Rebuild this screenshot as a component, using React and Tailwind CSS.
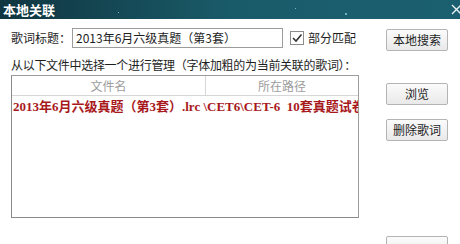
import React from "react";

const ui = { fontFamily: '"Noto Sans CJK SC", "Liberation Sans", sans-serif' };
const rowFont = { fontFamily: '"Liberation Serif", "Noto Sans CJK SC", serif' };

function Button({ children, className = "" }) {
  return (
    <div
      className={`flex h-[22px] w-[62px] items-center justify-center rounded-[2px] border border-[#b4b4b4] bg-gradient-to-b from-[#fbfbfb] to-[#e9e9e9] text-[12px] leading-none text-[#1e1e1e] ${className}`}
    >
      {children}
    </div>
  );
}

function TitleBar() {
  return (
    <div className="relative flex h-[19px] items-center bg-gradient-to-r from-[#0f3641] via-[#1a5b69] to-[#1b6070] pl-[3px]">
      <span className="text-[13px] font-bold leading-none text-white">本地关联</span>
      <span className="absolute left-[118px] top-[12px] h-[1px] w-[1px] bg-[#6fb7c6]" />
      <span className="absolute left-[345px] top-[13px] h-[2px] w-[2px] rounded-full bg-[#8fd0dc]" />
      <span className="absolute left-[295px] top-[8px] h-[1px] w-[1px] bg-[#6fb7c6]" />
      <svg className="absolute right-0 top-[4px]" width="9" height="11" viewBox="0 0 9 11">
        <path d="M1 1 L10 10 M10 1 L1 10" stroke="#e8f4f6" strokeWidth="1.3" fill="none" />
      </svg>
    </div>
  );
}

function CheckBox() {
  return (
    <div className="flex h-[14px] w-[14px] items-center justify-center border border-[#8c8c8c] bg-white">
      <svg width="12" height="12" viewBox="0 0 12 12">
        <path d="M2 6 L5 9 L10.5 2.5" stroke="#333" strokeWidth="1.6" fill="none" />
      </svg>
    </div>
  );
}

function FileList() {
  return (
    <div className="mt-[2px] h-[143px] w-[348px] overflow-hidden border border-[#9c9c9c] border-l-[#8a8a8a] border-b-[#8a8a8a] bg-white">
      <div className="flex h-[20px] border-b border-[#d6d6d6] text-[12px] leading-[19px] text-[#9c9c9c]">
        <div className="w-[194px] border-r border-[#d6d6d6] text-center">文件名</div>
        <div className="flex-1 text-center">所在路径</div>
      </div>
      <div
        className="mt-[3px] w-full overflow-hidden whitespace-nowrap pl-[1px] text-[13px] font-bold leading-[16px] text-[#a8191c]"
        style={rowFont}
      >
        2013年6月六级真题（第3套）.lrc \CET6\CET-6&nbsp;&nbsp;10套真题试卷
      </div>
    </div>
  );
}

export default function App() {
  return (
    <div className="h-[244px] w-[460px] overflow-hidden bg-white text-[#1e1e1e]" style={ui}>
      <TitleBar />
      <div className="flex pl-[11px]">
        <div className="w-[348px]">
          <div className="mt-[9px] flex h-[20px] items-center text-[12px]">
            <span className="w-[61px]">歌词标题：</span>
            <div className="flex h-[20px] w-[211px] items-center border border-[#9c9c9c] bg-white pl-[3px] text-[12px]">
              2013年6月六级真题（第3套）
            </div>
            <div className="ml-[7px]">
              <CheckBox />
            </div>
            <span className="ml-[4px]">部分匹配</span>
          </div>
          <div className="mt-[9px] h-[16px] whitespace-nowrap text-[12px] leading-[16px] tracking-[-0.3px]">
            从以下文件中选择一个进行管理（字体加粗的为当前关联的歌词）：
          </div>
          <FileList />
        </div>
        <div className="ml-[27px] flex flex-col">
          <Button className="mt-[10px]">本地搜索</Button>
          <Button className="mt-[32px]">浏览</Button>
          <Button className="mt-[14px]">删除歌词</Button>
          <Button className="mt-[95px]" />
        </div>
      </div>
    </div>
  );
}
